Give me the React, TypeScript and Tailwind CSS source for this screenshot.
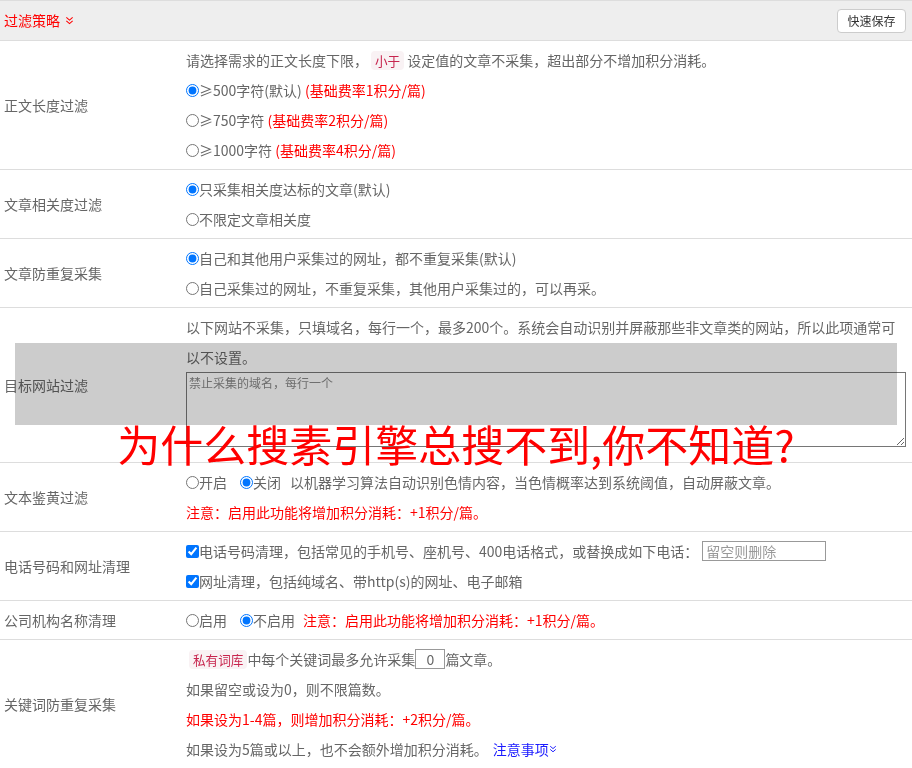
import React from "react";

const Radio = ({ name, checked }: { name: string; checked?: boolean }) => (
  <input
    type="radio"
    name={name}
    defaultChecked={checked}
    className="m-0 h-[13px] w-[13px] shrink-0"
  />
);

const Check = () => (
  <input type="checkbox" defaultChecked className="m-0 mr-0 h-[13px] w-[13px] shrink-0" />
);

const Tag = ({ children }: { children: React.ReactNode }) => (
  <span className="mx-[3px] rounded-[4px] bg-[#f9f2f4] px-[4px] py-[1px] text-[12.6px] leading-[17px] text-[#c7254e]">
    {children}
  </span>
);

const Chev = ({ color, size = 9 }: { color: string; size?: number }) => (
  <svg width={size} height={size} viewBox="0 0 10 10" fill="none" stroke={color} strokeWidth="1.2">
    <path d="M1.5 1.5 L5 4.5 L8.5 1.5" />
    <path d="M1.5 5.5 L5 8.5 L8.5 5.5" />
  </svg>
);

const Row = ({ label, children }: { label: string; children: React.ReactNode }) => (
  <div className="flex border-b border-[#dddddd]">
    <div className="flex w-[182px] shrink-0 items-center pl-[4px]">{label}</div>
    <div className="flex-1 py-[4px] pl-[4px] pr-[6px]">{children}</div>
  </div>
);

const Line = ({ children }: { children: React.ReactNode }) => (
  <div className="flex h-[30px] items-center whitespace-nowrap">{children}</div>
);

export default function App() {
  return (
    <div
      className="relative w-[912px] bg-white text-[14px] text-[#666666]"
      style={{ fontFamily: '"Noto Sans CJK SC", "Noto Sans", sans-serif' }}
    >
      <div className="flex h-[41px] items-center justify-between border-y border-[#dddddd] bg-[#eeeeee] pl-[4px] pr-[6px]">
        <div className="flex items-center gap-[5px] text-[#ff0000]">
          <span>过滤策略</span>
          <Chev color="#ff0000" />
        </div>
        <button className="h-[24px] w-[69px] rounded-[4px] border border-[#cccccc] bg-white text-[12px] text-[#333333]">
          快速保存
        </button>
      </div>

      <Row label="正文长度过滤">
        <Line>
          请选择需求的正文长度下限，<Tag>小于</Tag>设定值的文章不采集，超出部分不增加积分消耗。
        </Line>
        <Line>
          <Radio name="len" checked />
          ≥500字符(默认)&nbsp;<span className="text-[#ff0000]">(基础费率1积分/篇)</span>
        </Line>
        <Line>
          <Radio name="len" />
          ≥750字符&nbsp;<span className="text-[#ff0000]">(基础费率2积分/篇)</span>
        </Line>
        <Line>
          <Radio name="len" />
          ≥1000字符&nbsp;<span className="text-[#ff0000]">(基础费率4积分/篇)</span>
        </Line>
      </Row>

      <Row label="文章相关度过滤">
        <Line>
          <Radio name="rel" checked />
          只采集相关度达标的文章(默认)
        </Line>
        <Line>
          <Radio name="rel" />
          不限定文章相关度
        </Line>
      </Row>

      <Row label="文章防重复采集">
        <Line>
          <Radio name="dup" checked />
          自己和其他用户采集过的网址，都不重复采集(默认)
        </Line>
        <Line>
          <Radio name="dup" />
          自己采集过的网址，不重复采集，其他用户采集过的，可以再采。
        </Line>
      </Row>

      <Row label="目标网站过滤">
        <Line>
          以下网站不采集，只填域名，每行一个，最多200个。系统会自动识别并屏蔽那些非文章类的网站，所以此项通常可
        </Line>
        <Line>以不设置。</Line>
        <textarea
          placeholder="禁止采集的域名，每行一个"
          className="mb-[11px] block h-[75px] w-[720px] border border-[#767676] px-[2px] py-[1px] text-[12px] placeholder:text-[#888888]"
          style={{ fontFamily: '"Noto Sans CJK SC", sans-serif' }}
        />
      </Row>

      <Row label="文本鉴黄过滤">
        <Line>
          <Radio name="porn" />
          开启
          <span className="ml-[13px] flex items-center">
            <Radio name="porn" checked />
            关闭
          </span>
          <span className="ml-[9px]">以机器学习算法自动识别色情内容，当色情概率达到系统阈值，自动屏蔽文章。</span>
        </Line>
        <Line>
          <span className="text-[#ff0000]">注意：启用此功能将增加积分消耗：+1积分/篇。</span>
        </Line>
      </Row>

      <Row label="电话号码和网址清理">
        <Line>
          <Check />
          电话号码清理，包括常见的手机号、座机号、400电话格式，或替换成如下电话：
          <input
            placeholder="留空则删除"
            className="ml-[4px] h-[20px] w-[124px] border border-[#999999] px-[3px] text-[14px] placeholder:text-[#999999]"
          />
        </Line>
        <Line>
          <Check />
          网址清理，包括纯域名、带http(s)的网址、电子邮箱
        </Line>
      </Row>

      <Row label="公司机构名称清理">
        <Line>
          <Radio name="org" />
          启用
          <span className="ml-[13px] flex items-center">
            <Radio name="org" checked />
            不启用
          </span>
          <span className="ml-[8px] text-[#ff0000]">注意：启用此功能将增加积分消耗：+1积分/篇。</span>
        </Line>
      </Row>

      <Row label="关键词防重复采集">
        <Line>
          <Tag>私有词库</Tag>
          <span className="-ml-[3px]">中每个关键词最多允许采集</span>
          <input
            defaultValue="0"
            className="h-[20px] w-[30px] border border-[#999999] text-center text-[14px] text-[#666666]"
          />
          篇文章。
        </Line>
        <Line>如果留空或设为0，则不限篇数。</Line>
        <Line>
          <span className="text-[#ff0000]">如果设为1-4篇，则增加积分消耗：+2积分/篇。</span>
        </Line>
        <Line>
          如果设为5篇或以上，也不会额外增加积分消耗。
          <span className="ml-[5px] flex items-center text-[#1a1aff]">
            注意事项
            <Chev color="#1a1aff" size={8} />
          </span>
        </Line>
      </Row>

      <div className="pointer-events-none absolute left-[15px] top-[343px] h-[82px] w-[882px] bg-[#cccccc] mix-blend-multiply" />
      <div className="pointer-events-none absolute left-0 right-0 top-[422px] text-center text-[43px] leading-none text-[#ff0000]">
        为什么搜素引擎总搜不到,你不知道?
      </div>
    </div>
  );
}
